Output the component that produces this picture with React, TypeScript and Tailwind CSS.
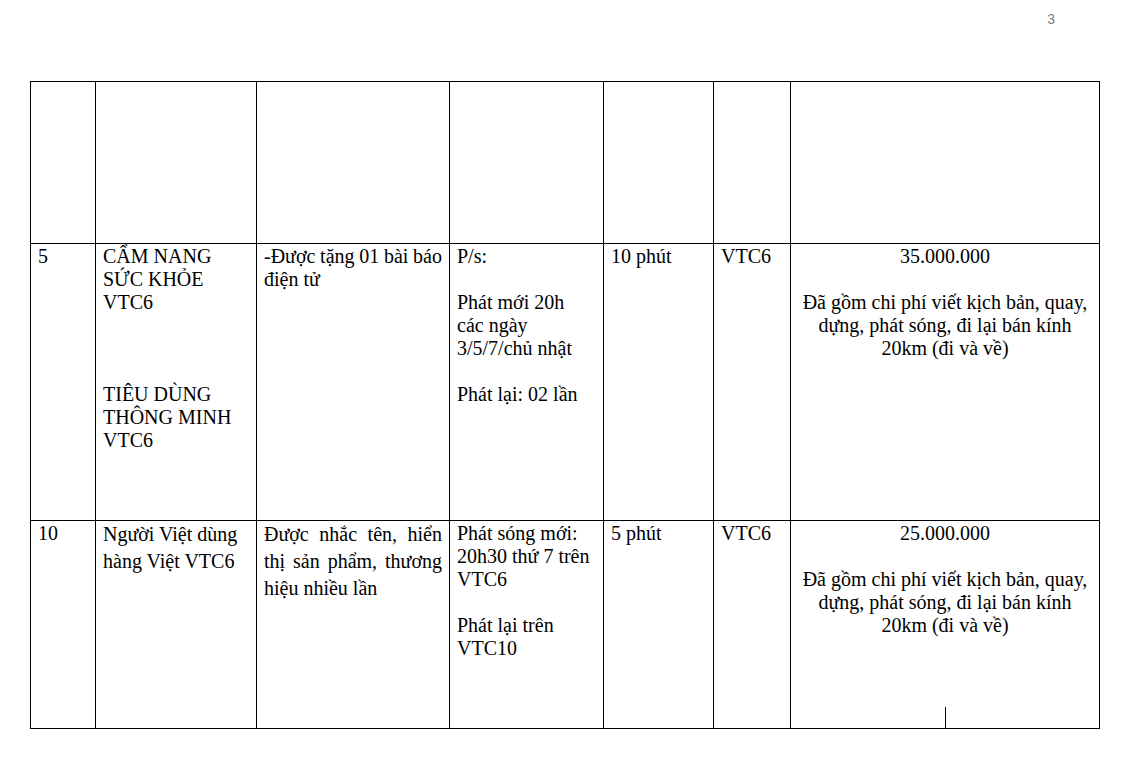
import React from "react"

const serif = { fontFamily: '"Liberation Serif", "Times New Roman", serif' }

// one justified line (not the last of its paragraph)
function J({ children, className = "" }: { children: React.ReactNode; className?: string }) {
  return (
    <span className={"block whitespace-nowrap text-justify [text-align-last:justify] " + className}>
      {children}
    </span>
  )
}

function Cell({
  children,
  className = "",
}: {
  children?: React.ReactNode
  className?: string
}) {
  return (
    <div className={"border-r border-b border-black px-[7px] pt-[1px] leading-[23px] " + className}>
      {children}
    </div>
  )
}

export default function App() {
  return (
    <div className="w-[1126px] h-[762px] bg-white text-black overflow-hidden" style={serif}>
      {/* Page number */}
      <div className="h-[81px] flex justify-end pt-[12px] pr-[71px]">
        <span
          className="text-[14px] text-[#7f7f7f] leading-none"
          style={{ fontFamily: '"Liberation Sans", Arial, sans-serif' }}
        >
          3
        </span>
      </div>

      {/* Table */}
      <div className="ml-[30px] w-[1070px] grid grid-cols-[65px_161px_193px_154px_110px_77px_309px] grid-rows-[162px_277px_208px] border-l border-t border-black text-[20px]">
        {/* Row 1 (continued from previous page) */}
        <Cell />
        <Cell />
        <Cell />
        <Cell />
        <Cell />
        <Cell />
        <Cell />

        {/* Row 2 */}
        <Cell>5</Cell>
        <Cell>
          CẨM NANG
          <br />
          SỨC KHỎE
          <br />
          VTC6
          <br />
          <br />
          <br />
          <br />
          TIÊU DÙNG
          <br />
          THÔNG MINH
          <br />
          VTC6
        </Cell>
        <Cell>
          <J className="[word-spacing:-3px]">-Được tặng 01 bài báo</J>
          <span className="block">điện tử</span>
        </Cell>
        <Cell>
          P/s:
          <br />
          <br />
          Phát mới 20h
          <br />
          các ngày
          <br />
          3/5/7/chủ nhật
          <br />
          <br />
          Phát lại: 02 lần
        </Cell>
        <Cell>10 phút</Cell>
        <Cell>VTC6</Cell>
        <Cell className="text-center">
          35.000.000
          <br />
          <br />
          Đã gồm chi phí viết kịch bản, quay,
          <br />
          dựng, phát sóng, đi lại bán kính
          <br />
          20km (đi và về)
        </Cell>

        {/* Row 3 */}
        <Cell>10</Cell>
        <Cell className="!pt-0 !leading-[27px]">
          Người Việt dùng
          <br />
          hàng Việt VTC6
        </Cell>
        <Cell className="!pt-0 !leading-[27px]">
          <J>Được nhắc tên, hiển</J>
          <J>thị sản phẩm, thương</J>
          <span className="block">hiệu nhiều lần</span>
        </Cell>
        <Cell>
          Phát sóng mới:
          <br />
          20h30 thứ 7 trên
          <br />
          VTC6
          <br />
          <br />
          Phát lại trên
          <br />
          VTC10
        </Cell>
        <Cell>5 phút</Cell>
        <Cell>VTC6</Cell>
        <Cell className="text-center flex flex-col">
          <div>
            25.000.000
            <br />
            <br />
            Đã gồm chi phí viết kịch bản, quay,
            <br />
            dựng, phát sóng, đi lại bán kính
            <br />
            20km (đi và về)
          </div>
          {/* text caret */}
          <div className="mt-auto mx-auto w-px h-[21px] bg-black" />
        </Cell>
      </div>
    </div>
  )
}
